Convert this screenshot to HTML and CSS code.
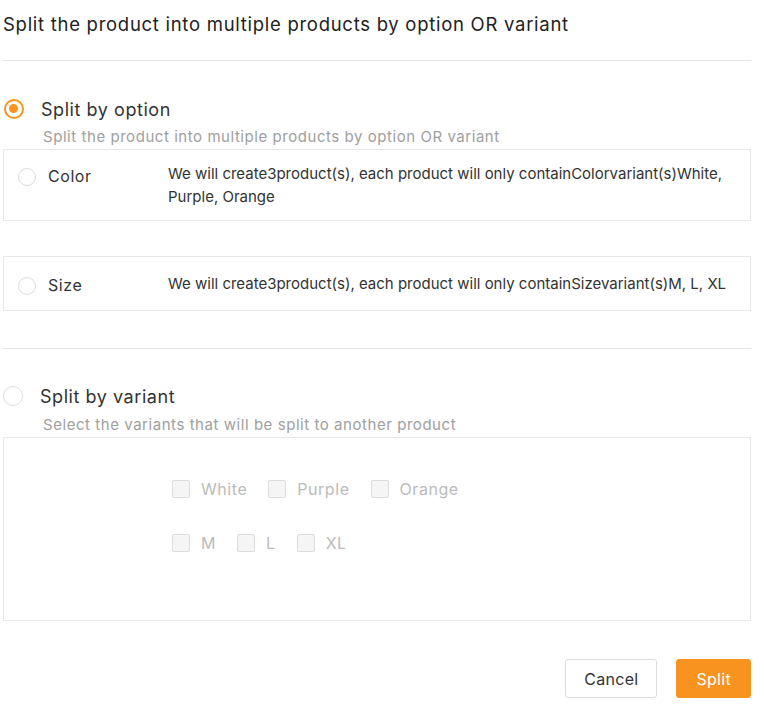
FILE: index.html
```html
<!DOCTYPE html>
<html lang="en">
<head>
    <meta charset="UTF-8">
    <meta name="viewport" content="width=device-width, initial-scale=1.0">
    <title>Split product</title>
    <link rel="stylesheet" href="styles.css">
</head>
<body>
    <div class="dialog">
        <div class="dialog-title">Split the product into multiple products by option OR variant</div>
        <div class="divider first"></div>

        <div class="split-mode">
            <label class="mode-row">
                <span class="radio checked"></span>
                <span class="mode-label">Split by option</span>
            </label>
            <div class="hint">Split the product into multiple products by option OR variant</div>

            <div class="option-box">
                <div class="option-name">
                    <span class="radio"></span>
                    <span>Color</span>
                </div>
                <div class="option-desc">We will create3product(s), each product will only containColorvariant(s)White, Purple, Orange</div>
            </div>

            <div class="option-box single">
                <div class="option-name">
                    <span class="radio"></span>
                    <span>Size</span>
                </div>
                <div class="option-desc">We will create3product(s), each product will only containSizevariant(s)M, L, XL</div>
            </div>
        </div>

        <div class="divider second"></div>

        <div class="split-mode">
            <label class="mode-row">
                <span class="radio"></span>
                <span class="mode-label">Split by variant</span>
            </label>
            <div class="hint">Select the variants that will be split to another product</div>

            <div class="variant-box">
                <div class="check-row">
                    <label class="check"><span class="box"></span>White</label>
                    <label class="check"><span class="box"></span>Purple</label>
                    <label class="check"><span class="box"></span>Orange</label>
                </div>
                <div class="check-row">
                    <label class="check"><span class="box"></span>M</label>
                    <label class="check"><span class="box"></span>L</label>
                    <label class="check"><span class="box"></span>XL</label>
                </div>
            </div>
        </div>

        <div class="footer">
            <button type="button" class="btn">Cancel</button>
            <button type="button" class="btn primary">Split</button>
        </div>
    </div>
</body>
</html>
```

FILE: styles.css
```css
body {
    margin: 0;
    padding: 0;
    background-color: white;
    font-family: Inter, "Liberation Sans", Arial, sans-serif;
    letter-spacing: 0.55px;
    color: #333;
}

.dialog {
    width: 748px;
    margin-left: 3px;
}

.dialog-title {
    font-size: 18.5px;
    letter-spacing: 0.72px;
    line-height: 24px;
    padding-top: 12px;
    color: #222;
}

.divider {
    height: 1px;
    background-color: #e6e6e6;
}

.divider.first {
    margin-top: 24px;
    margin-bottom: 35px;
}

.divider.second {
    margin-top: 37px;
    margin-bottom: 34px;
}

.mode-row {
    display: flex;
    align-items: center;
    height: 26px;
}

.mode-label {
    font-size: 18px;
    margin-left: 17px;
    color: #333;
}

.radio {
    width: 18px;
    height: 18px;
    border: 1px solid #ddd;
    border-radius: 50%;
    box-sizing: border-box;
    display: inline-block;
    flex-shrink: 0;
    background-color: white;
}

.radio.checked {
    border: 2px solid #f7931e;
    position: relative;
    width: 19px;
    height: 19px;
    margin-left: 1px;
}

.radio.checked::after {
    content: "";
    position: absolute;
    left: 3px;
    top: 3px;
    width: 9px;
    height: 9px;
    border-radius: 50%;
    background-color: #f7931e;
}

.mode-row .radio {
    width: 20px;
    height: 20px;
}

.hint {
    margin-left: 40px;
    margin-top: 5px;
    font-size: 15px;
    line-height: 20px;
    color: #a0a0a0;
}

.split-mode + .divider + .split-mode .hint {
    margin-top: 6px;
}

.option-box {
    display: flex;
    border: 1px solid #e8e8e8;
    padding: 12px 14px;
    margin-top: 2px;
    font-size: 15px;
    line-height: 23px;
}

.option-box + .option-box {
    margin-top: 35px;
}

.option-box.single {
    min-height: 55px;
    box-sizing: border-box;
    align-items: center;
}

.option-name {
    display: flex;
    align-items: center;
    width: 150px;
    flex-shrink: 0;
    font-size: 16px;
    height: 23px;
    margin-top: 3px;
}

.option-box.single .option-name {
    margin-top: 4px;
}

.option-name .radio {
    margin-right: 12px;
}

.option-desc {
    flex: 1;
    color: #333;
    letter-spacing: 0;
}

.variant-box {
    border: 1px solid #e8e8e8;
    margin-top: 2px;
    height: 184px;
    box-sizing: border-box;
    padding-top: 41px;
    padding-left: 168px;
}

.check-row {
    display: flex;
    gap: 21px;
    height: 20px;
    align-items: center;
}

.check-row + .check-row {
    margin-top: 34px;
}

.check {
    display: flex;
    align-items: center;
    font-size: 16px;
    color: #bbb;
}

.check .box {
    width: 18px;
    height: 18px;
    border: 1px solid #ddd;
    border-radius: 2px;
    background-color: #f5f5f5;
    box-sizing: border-box;
    margin-right: 11px;
}

.footer {
    display: flex;
    justify-content: flex-end;
    gap: 19px;
    margin-top: 38px;
}

.btn {
    height: 39px;
    padding: 0 18px;
    font-size: 16px;
    font-family: Inter, "Liberation Sans", Arial, sans-serif;
    letter-spacing: 0.3px;
    background-color: white;
    color: #333;
    border: 1px solid #ddd;
    border-radius: 3px;
    cursor: pointer;
}

.btn.primary {
    background-color: #f7931e;
    border-color: #f7931e;
    color: white;
    padding: 0 19px;
}
```
